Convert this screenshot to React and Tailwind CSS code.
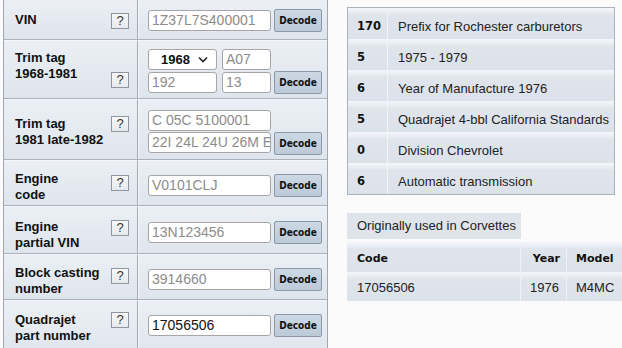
import React from "react";

const arial = { fontFamily: '"Liberation Sans", Arial, sans-serif' };
const dv = { fontFamily: '"DejaVu Sans", Verdana, sans-serif' };
const dvc = { fontFamily: '"DejaVu Sans Condensed", "DejaVu Sans", Verdana, sans-serif' };

function Q({ top }) {
  return (
    <div
      className="absolute left-[107px] w-[18px] h-[16px] border border-[#8f969e] bg-gradient-to-b from-[#f7f8fa] to-[#e6e9ed] text-[13px] leading-[14px] text-center text-[#333]"
      style={{ ...arial, top }}
    >
      ?
    </div>
  );
}

function Input({ value, ph, w = 123 }) {
  return (
    <div
      className={`h-[21px] border border-[#a6a6a6] rounded-[3px] bg-white pl-[3px] text-[14px] leading-[19px] whitespace-nowrap overflow-hidden ${ph ? "text-[#8c8c8c]" : "text-[#111]"}`}
      style={{ ...arial, width: w }}
    >
      {value}
    </div>
  );
}

function Decode() {
  return (
    <div
      className="w-[48px] h-[23px] border border-[#8a98a7] rounded-[2px] bg-gradient-to-b from-[#ccd8e4] to-[#bccad8] text-[10px] font-bold leading-[21px] text-center text-[#111]"
      style={dvc}
    >
      Decode
    </div>
  );
}

function Row({ h, labelTop, qTop, cTop, lines, children }) {
  return (
    <div className="flex border-b border-[#a9b1ba]" style={{ height: h }}>
      <div className="relative w-[134px] border-r border-[#a3abb4] border-t border-t-[#f4f6f9] bg-gradient-to-b from-[#ebeff5] to-[#dfe5ed]">
        <div
          className="absolute left-[11px] text-[13px] leading-[16px] font-bold text-[#111]"
          style={{ ...arial, top: labelTop }}
        >
          {lines.map((l, i) => (
            <div key={i}>{l}</div>
          ))}
        </div>
        <Q top={qTop} />
      </div>
      <div
        className="flex-1 border-l border-l-[#f2f4f7] border-t border-t-[#f4f6f9] bg-gradient-to-b from-[#ebeff5] to-[#dfe5ed] pl-[9px]"
        style={{ paddingTop: cTop }}
      >
        {children}
      </div>
    </div>
  );
}

function Single({ value, ph = true }) {
  return (
    <div className="flex items-start gap-[3px]">
      <div className="pt-[1px]">
        <Input value={value} ph={ph} />
      </div>
      <Decode />
    </div>
  );
}

const decodeRows = [
  ["170", "Prefix for Rochester carburetors"],
  ["5", "1975 - 1979"],
  ["6", "Year of Manufacture 1976"],
  ["5", "Quadrajet 4-bbl California Standards"],
  ["0", "Division Chevrolet"],
  ["6", "Automatic transmission"],
];

const rowBg =
  "bg-[linear-gradient(to_bottom,#f3f6fa_0px,#eaeef4_4px,#e0e5ec_7px,#dce2ea_100%)]";

export default function App() {
  return (
    <div className="w-[622px] h-[348px] overflow-hidden bg-[#fbfbfb] flex" style={arial}>
      {/* Left panel */}
      <div className="shrink-0 ml-[3px] w-[325px] h-[360px] border-l border-r border-[#a0a8b1] flex flex-col -mt-[1px]">
        <Row h={42} labelTop={12} qTop={13} cTop={9} lines={["VIN"]}>
          <Single value="1Z37L7S400001" />
        </Row>
        <Row h={60} labelTop={9} qTop={31} cTop={8} lines={["Trim tag", "1968-1981"]}>
          <div className="flex items-end gap-[3px]">
            <div className="flex flex-col gap-[2px]">
              <div className="flex gap-[5px]">
                <div
                  className="w-[69px] h-[21px] border border-[#a6a6a6] rounded-[3px] bg-white flex items-center justify-center gap-[8px] text-[13px] font-bold text-[#111]"
                  style={arial}
                >
                  <span className="ml-[4px]">1968</span>
                  <svg width="10" height="7" viewBox="0 0 10 7">
                    <path d="M1 1.5 L5 5.5 L9 1.5" fill="none" stroke="#222" strokeWidth="1.6" />
                  </svg>
                </div>
                <Input value="A07" ph w={49} />
              </div>
              <div className="flex gap-[5px]">
                <Input value="192" ph w={69} />
                <Input value="13" ph w={49} />
              </div>
            </div>
            <div className="-mb-[1px]">
              <Decode />
            </div>
          </div>
        </Row>
        <Row h={62} labelTop={16} qTop={16} cTop={10} lines={["Trim tag", "1981 late-1982"]}>
          <div className="flex items-end gap-[3px]">
            <div className="flex flex-col gap-[1px]">
              <Input value="C 05C 5100001" ph />
              <Input value="22I 24L 24U 26M E" ph />
            </div>
            <div className="-mb-[2px]">
              <Decode />
            </div>
          </div>
        </Row>
        <Row h={46} labelTop={10} qTop={14} cTop={13} lines={["Engine", "code"]}>
          <Single value="V0101CLJ" />
        </Row>
        <Row h={49} labelTop={12} qTop={13} cTop={14} lines={["Engine", "partial VIN"]}>
          <Single value="13N123456" />
        </Row>
        <Row h={47} labelTop={10} qTop={13} cTop={13} lines={["Block casting", "number"]}>
          <Single value="3914660" />
        </Row>
        <Row h={60} labelTop={11} qTop={11} cTop={13} lines={["Quadrajet", "part number"]}>
          <Single value="17056506" ph={false} />
        </Row>
      </div>

      {/* Right panel */}
      <div className="shrink-0 ml-[19px] pt-[7px] flex flex-col">
        <div className="w-[268px] border border-[#aab2bb]">
          {decodeRows.map(([k, v], i) => (
            <div key={i} className={`flex h-[31px] pt-[6px] ${rowBg}`}>
              <div
                className="w-[40px] border-r border-[#f0f3f7] -mt-[6px] pt-[6px] pl-[9px] flex items-center text-[11.5px] font-bold text-[#111]"
                style={dv}
              >
                {k}
              </div>
              <div className="flex-1 pl-[10px] flex items-center text-[13px] text-[#222]" style={arial}>
                {v}
              </div>
            </div>
          ))}
        </div>

        <div
          className="mt-[18px] w-[174px] h-[26px] bg-[#dfe4eb] pl-[10px] flex items-center text-[13px] text-[#222]"
          style={arial}
        >
          Originally used in Corvettes
        </div>
        <div className="mt-[3px] w-[280px] flex flex-col">
          <div className={`flex h-[30px] ${rowBg}`}>
            <div className="w-[174px] border-r border-[#eef1f5] pl-[10px] pt-[4px] flex items-center text-[11px] font-bold text-[#111]" style={dv}>
              Code
            </div>
            <div className="w-[46px] border-r border-[#eef1f5] pr-[6px] pt-[4px] flex items-center justify-end text-[11px] font-bold text-[#111]" style={dv}>
              Year
            </div>
            <div className="flex-1 pl-[9px] pt-[4px] flex items-center text-[11px] font-bold text-[#111]" style={dv}>
              Model
            </div>
          </div>
          <div className={`flex h-[29px] ${rowBg}`}>
            <div className="w-[174px] border-r border-[#eef1f5] pl-[10px] pt-[2px] flex items-center text-[13px] text-[#222]" style={arial}>
              17056506
            </div>
            <div className="w-[46px] border-r border-[#eef1f5] pr-[7px] pt-[2px] flex items-center justify-end text-[13px] text-[#222]" style={arial}>
              1976
            </div>
            <div className="flex-1 pl-[9px] pt-[2px] flex items-center text-[13px] text-[#222]" style={arial}>
              M4MC
            </div>
          </div>
        </div>
      </div>
    </div>
  );
}
